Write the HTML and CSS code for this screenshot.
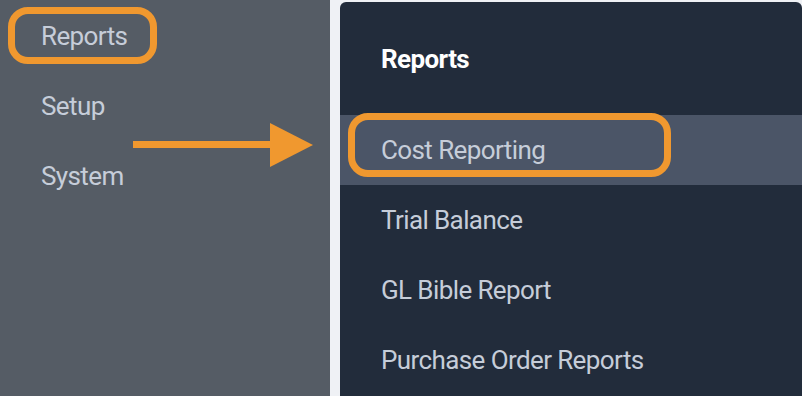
FILE: index.html
```html
<!DOCTYPE html>
<html lang="en">
<head>
    <meta charset="UTF-8">
    <meta name="viewport" content="width=device-width, initial-scale=1.0">
    <title>Reports menu</title>
    <link rel="stylesheet" href="styles.css">
</head>
<body>
    <div class="sidebar">
        <div class="nav-item marked">Reports</div>
        <div class="nav-item">Setup</div>
        <div class="nav-item">System</div>
    </div>

    <div class="main">
        <div class="menu">
            <div class="menu-title">Reports</div>
            <div class="menu-item active marked">Cost Reporting</div>
            <div class="menu-item">Trial Balance</div>
            <div class="menu-item">GL Bible Report</div>
            <div class="menu-item">Purchase Order Reports</div>
        </div>
    </div>

    <!-- annotation arrow -->
    <svg class="arrow" width="190" height="50" viewBox="0 0 190 50">
        <rect x="3" y="21" width="140" height="7" fill="#f0982f"/>
        <polygon points="140,3 183,25 140,47" fill="#f0982f"/>
    </svg>
</body>
</html>
```

FILE: styles.css
```css
:root {
    --sidebar-bg: #555c65;
    --page-bg: #eff1f5;
    --menu-bg: #222c3b;
    --menu-active: #4b5567;
    --text-light: #c6cdd9;
    --orange: #f0982f;
}

* {
    margin: 0;
    padding: 0;
    box-sizing: border-box;
}

body {
    display: flex;
    height: 396px;
    overflow: hidden;
    position: relative;
    font-family: Roboto, "Liberation Sans", sans-serif;
    font-size: 26px;
    letter-spacing: -0.6px;
    color: var(--text-light);
    background-color: var(--page-bg);
}

.sidebar {
    width: 330px;
    padding-top: 1px;
    background-color: var(--sidebar-bg);
}

.nav-item {
    line-height: 70px;
    padding-left: 41px;
}

.marked {
    position: relative;
}

.marked::after {
    content: "";
    position: absolute;
    box-sizing: border-box;
    border: 7px solid var(--orange);
    border-radius: 20px;
}

.nav-item.marked::after {
    left: 8px;
    top: 6px;
    width: 149px;
    height: 57px;
}

.main {
    flex: 1;
    display: flex;
    flex-direction: column;
    padding: 2px 0 0 10px;
}

.menu {
    flex: 1;
    background-color: var(--menu-bg);
    border-radius: 6px 6px 0 0;
}

.menu-title {
    line-height: 70px;
    padding: 22px 0 21px 41px;
    font-weight: 700;
    color: #ffffff;
}

.menu-item {
    line-height: 70px;
    padding-left: 41px;
}

.menu-item.active {
    background-color: var(--menu-active);
}

.menu-item.marked::after {
    left: 8px;
    top: -2px;
    width: 323px;
    height: 64px;
}

.arrow {
    position: absolute;
    left: 130px;
    top: 120px;
}
```
